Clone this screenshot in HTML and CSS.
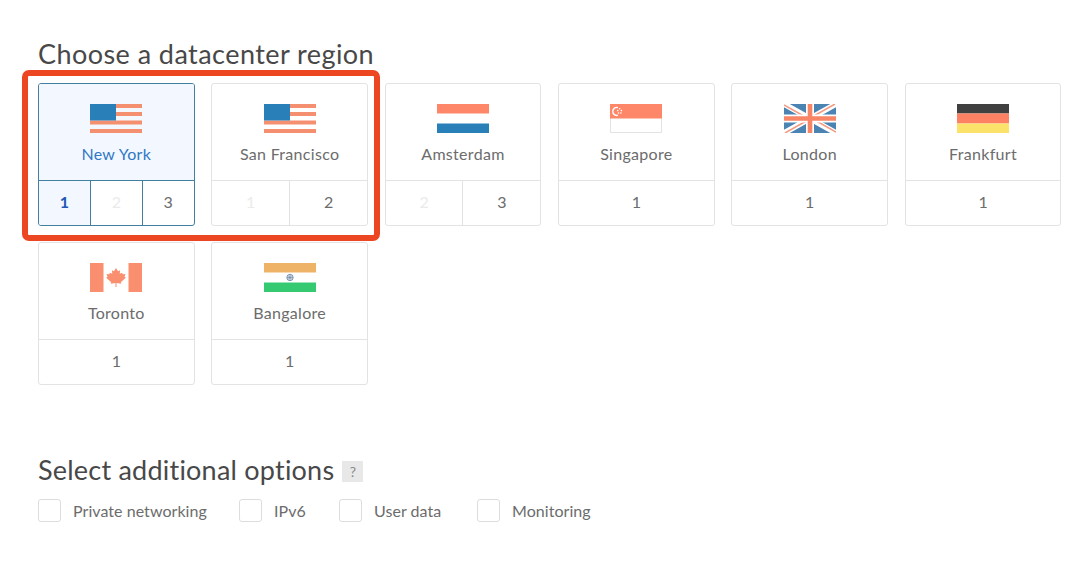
FILE: index.html
```html
<!DOCTYPE html>
<html lang="en">
<head>
    <meta charset="UTF-8">
    <meta name="viewport" content="width=device-width, initial-scale=1.0">
    <title>Create Droplet</title>
    <link rel="stylesheet" href="styles.css">
</head>
<body>
    <section class="regions">
        <h2 class="title title-region">Choose a datacenter region</h2>
        <div class="grid">
            <div class="card selected">
                <div class="region">
                    <svg class="flag" viewBox="0 0 52 29" preserveAspectRatio="none">
                        <path fill="#f4906f" d="M0 0h52v4H0zM0 8h52v4H0zM0 16.5h52v4H0zM0 25h52v4H0z"/>
                        <path fill="#2980b9" d="M0 0h26v16.5H0z"/>
                    </svg>
                    <span class="name">New York</span>
                </div>
                <div class="slots">
                    <span class="slot active">1</span>
                    <span class="slot disabled">2</span>
                    <span class="slot">3</span>
                </div>
            </div>

            <div class="card">
                <div class="region">
                    <svg class="flag" viewBox="0 0 52 29" preserveAspectRatio="none">
                        <path fill="#f4906f" d="M0 0h52v4H0zM0 8h52v4H0zM0 16.5h52v4H0zM0 25h52v4H0z"/>
                        <path fill="#2980b9" d="M0 0h26v16.5H0z"/>
                    </svg>
                    <span class="name">San Francisco</span>
                </div>
                <div class="slots">
                    <span class="slot disabled">1</span>
                    <span class="slot">2</span>
                </div>
            </div>

            <div class="card">
                <div class="region">
                    <svg class="flag" viewBox="0 0 52 29" preserveAspectRatio="none">
                        <path fill="#ff8769" d="M0 0h52v9.5H0z"/>
                        <path fill="#2980b9" d="M0 19.5h52V29H0z"/>
                    </svg>
                    <span class="name">Amsterdam</span>
                </div>
                <div class="slots">
                    <span class="slot disabled">2</span>
                    <span class="slot">3</span>
                </div>
            </div>

            <div class="card">
                <div class="region">
                    <svg class="flag" viewBox="0 0 52 29" preserveAspectRatio="none">
                        <path fill="#fff" stroke="#e3e3e3" d="M.5.5h51v28H.5z"/>
                        <path fill="#ff8769" d="M0 0h52v14.5H0z"/>
                        <path fill="none" stroke="#fff" stroke-width="1.4" d="M8 3.6a4 4 0 1 0 0 7.6"/>
                        <g fill="#fff">
                            <circle cx="9.7" cy="4.8" r=".8"/>
                            <circle cx="7.8" cy="6.6" r=".8"/>
                            <circle cx="11.4" cy="6.6" r=".8"/>
                            <circle cx="8.5" cy="9" r=".8"/>
                            <circle cx="10.9" cy="9" r=".8"/>
                        </g>
                    </svg>
                    <span class="name">Singapore</span>
                </div>
                <div class="slots">
                    <span class="slot">1</span>
                </div>
            </div>

            <div class="card">
                <div class="region">
                    <svg class="flag" viewBox="0 0 52 29" preserveAspectRatio="none">
                        <path fill="#4b83b3" d="M0 0h52v29H0z"/>
                        <path stroke="#fff" stroke-width="5.6" d="M0 0l52 29M52 0L0 29"/>
                        <path stroke="#f59a80" stroke-width="1.5" d="M0 1l24 13.5M51 0L28 13M1 29l23-13M52 28L28 14.5"/>
                        <path stroke="#fff" stroke-width="8" d="M26 0v29M0 14.5h52"/>
                        <path stroke="#f98567" stroke-width="4.6" d="M26 0v29M0 14.5h52"/>
                    </svg>
                    <span class="name">London</span>
                </div>
                <div class="slots">
                    <span class="slot">1</span>
                </div>
            </div>

            <div class="card">
                <div class="region">
                    <svg class="flag" viewBox="0 0 52 29" preserveAspectRatio="none">
                        <path fill="#404040" d="M0 0h52v9.5H0z"/>
                        <path fill="#ff8163" d="M0 9.5h52v10H0z"/>
                        <path fill="#fae26b" d="M0 19.5h52V29H0z"/>
                    </svg>
                    <span class="name">Frankfurt</span>
                </div>
                <div class="slots">
                    <span class="slot">1</span>
                </div>
            </div>

            <div class="card">
                <div class="region">
                    <svg class="flag" viewBox="0 0 52 29" preserveAspectRatio="none">
                        <path fill="#fa8f6f" d="M0 0h13.5v29H0zM38.5 0H52v29H38.5z"/>
                        <path fill="#fa8f6f" d="M26 5l2 3.2 2.200-1-.5 3.500 2.400-1 .7 1.600 2.700-.3-1 2.800 1.300 1-5 4.400.5 1.500-4.800-.6V24h-1v-3.900l-4.800.6.5-1.500-5-4.400 1.300-1-1-2.800 2.700.3.7-1.600 2.400 1-.5-3.500 2.200 1z"/>
                    </svg>
                    <span class="name">Toronto</span>
                </div>
                <div class="slots">
                    <span class="slot">1</span>
                </div>
            </div>

            <div class="card">
                <div class="region">
                    <svg class="flag" viewBox="0 0 52 29" preserveAspectRatio="none">
                        <path fill="#efb368" d="M0 0h52v9.5H0z"/>
                        <path fill="#35ca72" d="M0 19.5h52V29H0z"/>
                        <circle cx="26" cy="14.5" r="3.2" fill="#e4ebf3" stroke="#7189a8" stroke-width=".9"/>
                        <path stroke="#7189a8" stroke-width=".7" d="M26 11.5v6M23 14.5h6M24 12.5l4 4M28 12.5l-4 4"/>
                    </svg>
                    <span class="name">Bangalore</span>
                </div>
                <div class="slots">
                    <span class="slot">1</span>
                </div>
            </div>
        </div>
        <div class="highlight"></div>
    </section>

    <section class="options">
        <h2 class="title title-options">Select additional options <span class="help">?</span></h2>
        <div class="checks">
            <label class="check check-network"><input type="checkbox"><span>Private networking</span></label>
            <label class="check check-ipv6"><input type="checkbox"><span>IPv6</span></label>
            <label class="check check-data"><input type="checkbox"><span>User data</span></label>
            <label class="check check-monitor"><input type="checkbox"><span>Monitoring</span></label>
        </div>
    </section>
</body>
</html>
```

FILE: styles.css
```css
* {
    margin: 0;
    padding: 0;
    box-sizing: border-box;
}

body {
    font-family: Lato, "Liberation Sans", sans-serif;
    background-color: #fff;
    color: #6c6c6c;
    padding: 37px 18px 0 38px;
}

.regions {
    position: relative;
}

.title {
    font-size: 27px;
    font-weight: 400;
    line-height: 34px;
    color: #484848;
    white-space: nowrap;
}

.title-region {
    letter-spacing: 0.44px;
    margin-bottom: 12px;
}

.grid {
    display: grid;
    grid-template-columns: repeat(6, 156.6px);
    column-gap: 16.75px;
    row-gap: 16px;
}

.card {
    height: 143px;
    border: 1px solid #e3e3e3;
    border-radius: 3px;
    overflow: hidden;
}

.region {
    height: 96px;
    display: flex;
    flex-direction: column;
    align-items: center;
    padding-top: 20px;
}

.flag {
    width: 52px;
    height: 29px;
}

.name {
    margin-top: 11px;
    font-size: 16px;
    line-height: 20px;
    letter-spacing: 0.3px;
}

.slots {
    display: flex;
    height: 45px;
    border-top: 1px solid #e3e3e3;
}

.slot {
    flex: 1;
    height: 45px;
    font-size: 16px;
    line-height: 42px;
    text-align: center;
}

.slot + .slot {
    border-left: 1px solid #e3e3e3;
}

.disabled {
    color: #ebebeb;
}

.selected,
.selected .slots,
.selected .slot + .slot {
    border-color: #437f9e;
}

.selected .region,
.selected .active {
    background-color: #f3f7ff;
}

.selected .name {
    color: #2f78c4;
}

.selected .active {
    color: #2358b5;
    font-weight: 700;
}

/* red frame over the first two regions */
.highlight {
    position: absolute;
    left: -16px;
    top: 33px;
    width: 358px;
    height: 171px;
    border: 6px solid #ed4622;
    border-radius: 7px;
}

.options {
    margin-top: 68px;
}

.title-options {
    display: flex;
    align-items: center;
    letter-spacing: 0.22px;
}

.help {
    width: 21px;
    height: 21px;
    margin: 3px 0 0 8px;
    background-color: #e8e8e8;
    color: #888;
    font-size: 14px;
    line-height: 21px;
    letter-spacing: 0;
    text-align: center;
}

.checks {
    display: flex;
    margin-top: 12px;
}

.check {
    display: flex;
    align-items: center;
    font-size: 16px;
    line-height: 23px;
    letter-spacing: 0.05px;
}

.check input {
    appearance: none;
    width: 23px;
    height: 23px;
    margin-right: 12px;
    border: 1px solid #ddd;
    border-radius: 3px;
}

.check-network {
    width: 201px;
}

.check-ipv6 {
    width: 100px;
}

.check-data {
    width: 138px;
}
```
